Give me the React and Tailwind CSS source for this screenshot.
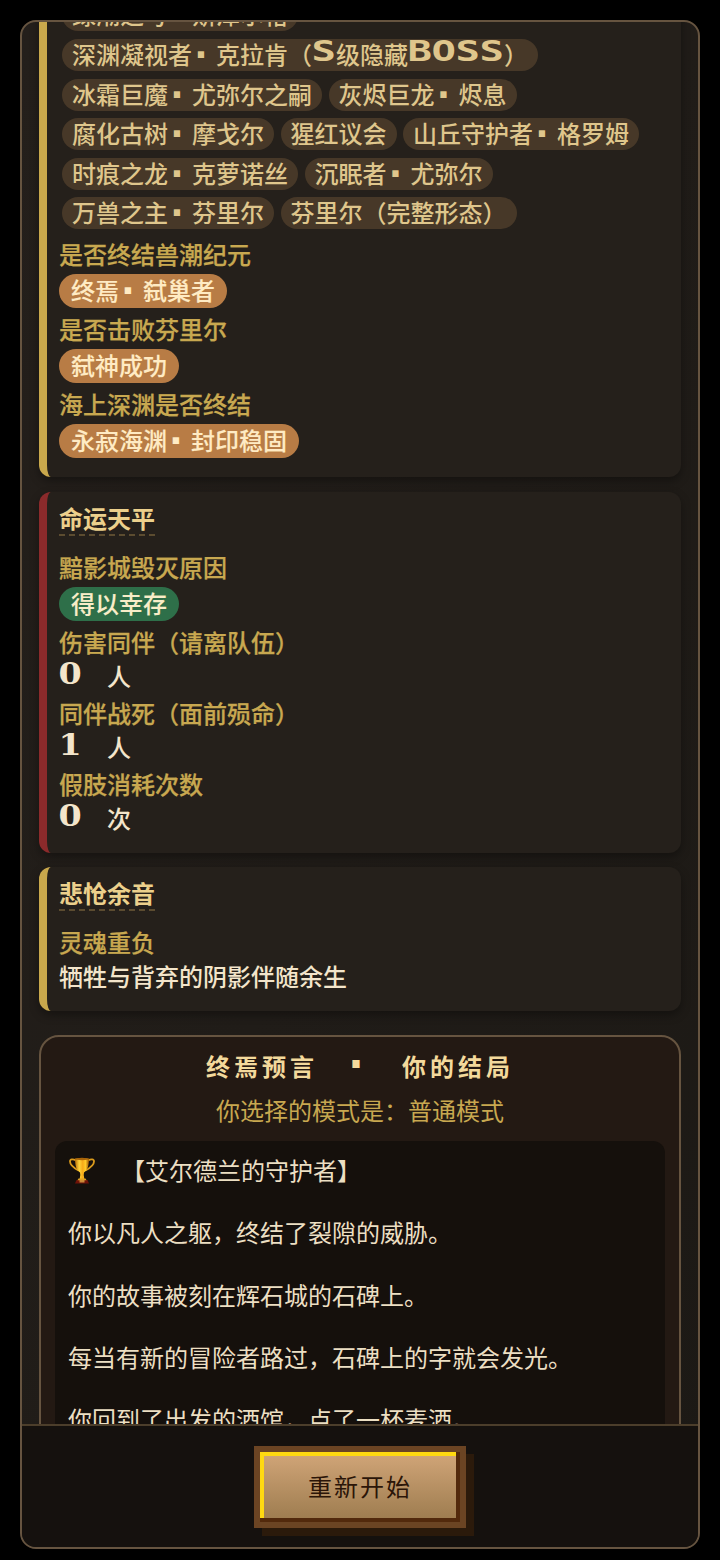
const CELL = "inline-block w-6 h-4 text-center leading-4 overflow-visible font-bold whitespace-pre";

// Latin glyphs and the middle dot sit on full-width 24px cells.
function Wide({ children }) {
  return [...children].map((ch, i) => {
    if (ch === "·")
      return (
        <span key={i} className={`${CELL} align-[-4px] text-[38px] [font-family:'DejaVu_Sans_Mono',monospace]`}>
          <span className="inline-block -ml-1.5 w-6">·</span>
        </span>
      );
    if (/[A-Z]/.test(ch))
      return (
        <span key={i} className={`${CELL} align-[3px] text-[29px] [font-family:'DejaVu_Sans_Mono',monospace]`}>
          <span className="inline-block -ml-px scale-x-[1.4]">{ch}</span>
        </span>
      );
    if (/[0-9]/.test(ch))
      return (
        <span key={i} className={`${CELL} align-[2px] text-[29px] [font-family:'DejaVu_Serif',serif]`}>
          <span className="inline-block -ml-0.5 scale-x-[1.15]">{ch}</span>
        </span>
      );
    if (ch === " ") return <span key={i} className="inline-block w-6"> </span>;
    return ch;
  });
}

const foes = [
  ["绿潮之母·斯泽尔格"],
  ["深渊凝视者·克拉肯（S级隐藏BOSS）"],
  ["冰霜巨魔·尤弥尔之嗣", "灰烬巨龙·烬息"],
  ["腐化古树·摩戈尔", "猩红议会", "山丘守护者·格罗姆"],
  ["时痕之龙·克萝诺丝", "沉眠者·尤弥尔"],
  ["万兽之主·芬里尔", "芬里尔（完整形态）"],
];

function Card({ edge, title, className, children }) {
  return (
    <section className={`rounded-xl border-l-8 bg-[#25201b] pl-3 pb-4 shadow-[0_4px_10px_rgba(0,0,0,0.35)] ${edge} ${className}`}>
      {title && (
        <div className="flex pt-3 pb-[13px]">
          <h2 className="h-8 border-b-2 border-dashed border-[#5c4c30] text-2xl leading-[28px] font-bold text-[#ecd08c]">{title}</h2>
        </div>
      )}
      {children}
    </section>
  );
}

function Field({ label, tone, children }) {
  return (
    <div className="pb-[3px]">
      <div className="h-[38px] leading-[36px] font-medium text-[#c8a850] [-webkit-text-stroke:0.25px_#c8a850]">{label}</div>
      {tone ? (
        <div className="flex">
          <span className={`h-[34px] rounded-full px-3 leading-[31px] font-medium whitespace-nowrap [-webkit-text-stroke:0.1px_currentColor] ${tone}`}>
            <Wide>{children}</Wide>
          </span>
        </div>
      ) : (
        <div className="h-[30px] leading-[28px] font-medium whitespace-nowrap text-[#f3e5cb]">
          <Wide>{children}</Wide>
        </div>
      )}
    </div>
  );
}

function Trophy() {
  return (
    <svg className="mr-[26px] h-7 w-[27px] shrink-0" viewBox="0 0 27 28">
      <defs>
        <linearGradient id="cup" x1="0" x2="1">
          <stop offset="0" stopColor="#b66c08" />
          <stop offset="0.3" stopColor="#ffd43a" />
          <stop offset="0.55" stopColor="#f6aa18" />
          <stop offset="0.75" stopColor="#ffc928" />
          <stop offset="1" stopColor="#9c5404" />
        </linearGradient>
      </defs>
      <path d="M8 4.500C5 2.800 2 3 2 5.500c0 4 4 6.500 8.500 9M20 4.500c3-1.700 6-1.500 6 1 0 4-4 6.500-8.500 9" fill="none" stroke="#d99a1c" strokeWidth="1.800" />
      <path d="M7 2.500h14c0 7-1.500 12-5 14l-.3 2.500.8 5h-5l.8-5-.3-2.500C8.500 14.500 7 9.500 7 2.500Z" fill="url(#cup)" />
      <ellipse cx="14" cy="3" rx="7" ry="1.200" fill="#a86308" />
      <path d="M8.500 24h11l1.500 3.500H7Z" fill="#6e1208" />
      <path d="M11.500 24h5v2.500h-5Z" fill="#c98a3a" />
      <path d="M10.500 22.500h7l1 1.800h-9Z" fill="#e0a020" />
    </svg>
  );
}

const story = [
  "你以凡人之躯，终结了裂隙的威胁。",
  "你的故事被刻在辉石城的石碑上。",
  "每当有新的冒险者路过，石碑上的字就会发光。",
  "你回到了出发的酒馆，点了一杯麦酒。",
];

export default function App() {
  return (
    <div className="h-[1560px] w-[720px] bg-black px-5 pt-5 text-2xl [font-family:'Noto_Sans_CJK_SC',sans-serif]">
      <main className="flex h-[1529px] flex-col overflow-hidden rounded-2xl border-2 border-[#665440] bg-linear-to-br from-[#241f1b] to-[#1c1915]">
        <div className="min-h-0 flex-1 overflow-hidden px-[17px]">
          <Card edge="border-[#c9a84c]" className="-mt-10 pt-[17px]">
            <div className="flex flex-col gap-[7.6px] pt-[0.4px] pb-[7px] pl-[3px]">
              {foes.map((row) => (
                <div key={row[0]} className="flex h-8 gap-[6.5px]">
                  {row.map((foe) => (
                    <span key={foe} className="h-8 rounded-full bg-[#473828] px-2.5 leading-[30px] font-medium whitespace-nowrap text-[#dfc68c]">
                      <Wide>{foe}</Wide>
                    </span>
                  ))}
                </div>
              ))}
            </div>
            <Field label="是否终结兽潮纪元" tone="bg-[#b87c45] text-[#ffebc4]">终焉·弑巢者</Field>
            <Field label="是否击败芬里尔" tone="bg-[#b87c45] text-[#ffebc4]">弑神成功</Field>
            <Field label="海上深渊是否终结" tone="bg-[#b87c45] text-[#ffebc4]">永寂海渊·封印稳固</Field>
          </Card>

          <Card edge="border-[#8b2a2b]" className="mt-[15px]" title="命运天平">
            <Field label="黯影城毁灭原因" tone="bg-[#2e6f49] text-[#f8edc8]">得以幸存</Field>
            <Field label="伤害同伴（请离队伍）">0 人</Field>
            <Field label="同伴战死（面前殒命）">1 人</Field>
            <Field label="假肢消耗次数">0 次</Field>
          </Card>

          <Card edge="border-[#c9a84c]" className="mt-3.5" title="悲怆余音">
            <Field label="灵魂重负">牺牲与背弃的阴影伴随余生</Field>
          </Card>

          <section className="mt-6 rounded-[20px] border-2 border-[#665440] bg-[#231913] px-3.5">
            <h2 className="mt-3.5 h-8 text-center leading-[30px] font-bold whitespace-nowrap text-[#f3d99c] tracking-[4px]">
              终焉预言
              <span className="inline-block h-8 w-[84px] text-center align-top">
                <span className="mr-2 inline-block text-[44px] leading-[28px] tracking-normal [font-family:'DejaVu_Sans_Mono',monospace]">·</span>
              </span>
              你的结局
            </h2>
            <p className="mt-3 h-8 text-center leading-[30px] text-[#c8a850]">你选择的模式是：普通模式</p>
            <div className="mt-3.5 rounded-xl bg-[#15100c] px-[13px] text-[#ecdfc3]">
              <p className="flex h-[60px] items-center pb-0.5 whitespace-nowrap"><Trophy />【艾尔德兰的守护者】</p>
              {story.map((line) => (
                <p key={line} className="h-[62.3px] leading-[61.5px] whitespace-nowrap">{line}</p>
              ))}
            </div>
          </section>
        </div>

        <footer className="flex h-[123px] shrink-0 justify-center border-t-2 border-[#4c3e2b] bg-[#15110e] pt-5">
          <button className="h-[82px] w-[212px] border-6 border-[#6b4423] bg-linear-to-b from-[#d2a679] to-[#9c7b4e] pb-0.5 leading-[66px] tracking-[2px] text-[#2b1508] shadow-[8px_8px_0_#2b1a0b,inset_-4px_-4px_0_#52290c,inset_4px_4px_0_#ffd911]">
            重新开始
          </button>
        </footer>
      </main>
    </div>
  );
}
